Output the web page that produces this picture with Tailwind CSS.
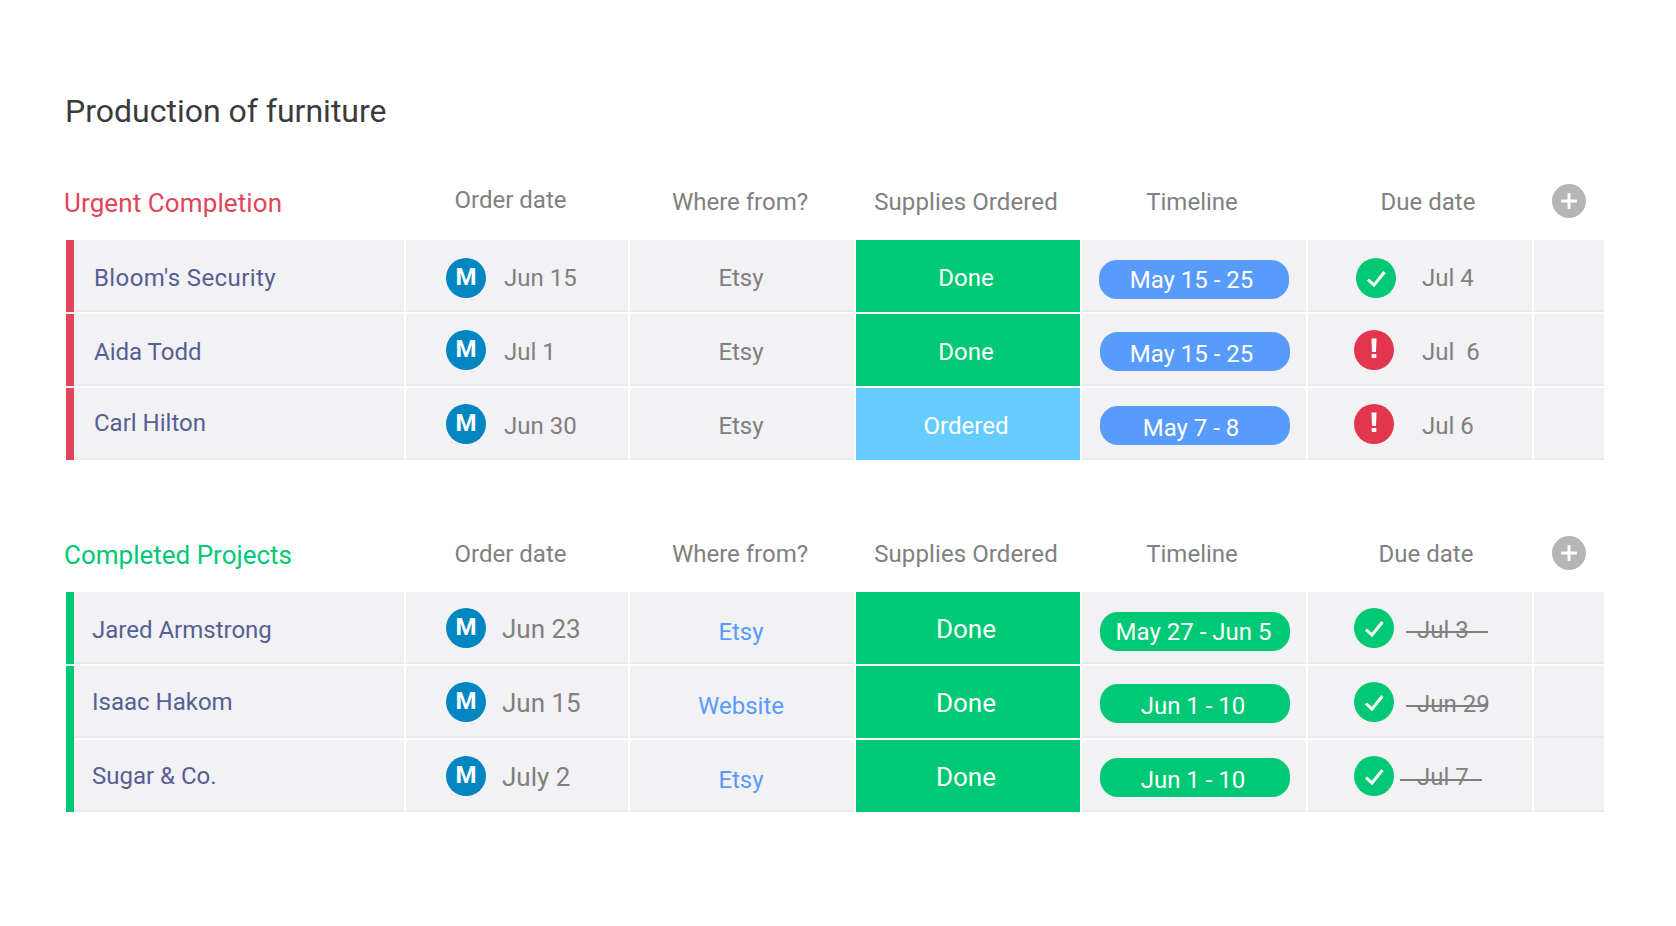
<!DOCTYPE html>
<html lang="en">
<head>
  <meta charset="UTF-8" />
  <title>Production of furniture</title>
  <script src="https://cdn.jsdelivr.net/npm/@tailwindcss/browser@4"></script>
</head>
<body class="bg-white font-['Roboto',sans-serif] text-[24px]">
  <div class="w-[1676px] h-[926px] pl-[66px] pt-[88px]">
    <h1 class="text-[32px] leading-[46px] text-[#3b3b3b] h-[46px] -ml-[1px]">Production of furniture</h1>

    <!-- Urgent Completion -->
    <div class="flex gap-[2px] h-[106px] text-[#808080]">
      <div class="w-[338px] -ml-[2px] mr-[2px] pt-[50px] text-[#e2445c] text-[26px] tracking-[0.1px]">Urgent Completion</div>
      <div class="w-[222px] pt-[48px] pr-[13px] text-center">Order date</div>
      <div class="w-[224px] pt-[50px] pr-[4px] text-center">Where from?</div>
      <div class="w-[224px] pt-[50px] pr-[4px] text-center tracking-[0.1px]">Supplies Ordered</div>
      <div class="w-[224px] pt-[50px] pr-[4px] text-center">Timeline</div>
      <div class="w-[224px] pt-[50px] pl-[16px] text-center">Due date</div>
      <div class="w-[70px] pt-[50px] pl-[18px]">
        <svg width="34" height="34" viewBox="0 0 34 34"><circle cx="17" cy="17" r="17" fill="#b5b5b5"/><path d="M17 9v16M9 17h16" stroke="#fff" stroke-width="3"/></svg>
      </div>
    </div>
    <div class="flex flex-col gap-[2px] w-[1538px]">
      <!-- row -->
      <div class="flex h-[72px]">
        <div class="w-[8px] bg-[#e2445c]"></div>
        <div class="w-[330px] bg-[#f2f1f4] border-b-2 border-[#e9e8ec] pl-[20px] pt-[20px] leading-[36px] tracking-[0.4px] text-[#565f94]">Bloom's Security</div>
        <div class="w-[222px] ml-[2px] bg-[#f2f1f4] border-b-2 border-[#e9e8ec] flex items-start pl-[40px] text-[#808080]"><span class="mt-[18px] w-[40px] h-[40px] pb-[3px] rounded-full bg-[#0086c0] text-white font-bold flex items-center justify-center">M</span><span class="ml-[18px] mt-[20px] leading-[36px]">Jun 15</span></div>
        <div class="w-[224px] ml-[2px] bg-[#f2f1f4] border-b-2 border-[#e9e8ec] pt-[20px] pr-[2px] leading-[36px] text-center text-[#808080]">Etsy</div>
        <div class="w-[224px] ml-[2px] bg-[#00c875] pt-[20px] pr-[4px] leading-[36px] text-center text-white">Done</div>
        <div class="w-[224px] ml-[2px] bg-[#f2f1f4] border-b-2 border-[#e9e8ec] pl-[17px] pt-[20px]"><div class="w-[190px] h-[39px] pt-[1px] rounded-[18px] bg-[#579bfc] text-white leading-[39px] text-center pr-[5px]">May 15 - 25</div></div>
        <div class="w-[224px] ml-[2px] bg-[#f2f1f4] border-b-2 border-[#e9e8ec] flex items-start pl-[48px] text-[#808080]"><svg class="mt-[18px]" width="40" height="40" viewBox="0 0 40 40"><circle cx="20" cy="20" r="20" fill="#00c875"/><path d="M12 21.5l6 5.5L28.5 14" fill="none" stroke="#fff" stroke-width="3"/></svg><span class="ml-[26px] mt-[20px] leading-[36px]">Jul 4</span></div>
        <div class="w-[70px] ml-[2px] bg-[#f2f1f4] border-b-2 border-[#e9e8ec]"></div>
      </div>
      <!-- row -->
      <div class="flex h-[72px]">
        <div class="w-[8px] bg-[#e2445c]"></div>
        <div class="w-[330px] bg-[#f2f1f4] border-b-2 border-[#e9e8ec] pl-[20px] pt-[20px] leading-[36px] text-[#565f94]">Aida Todd</div>
        <div class="w-[222px] ml-[2px] bg-[#f2f1f4] border-b-2 border-[#e9e8ec] flex items-start pl-[40px] text-[#808080]"><span class="mt-[16px] w-[40px] h-[40px] pb-[3px] rounded-full bg-[#0086c0] text-white font-bold flex items-center justify-center">M</span><span class="ml-[18px] mt-[20px] leading-[36px]">Jul 1</span></div>
        <div class="w-[224px] ml-[2px] bg-[#f2f1f4] border-b-2 border-[#e9e8ec] pt-[20px] pr-[2px] leading-[36px] text-center text-[#808080]">Etsy</div>
        <div class="w-[224px] ml-[2px] bg-[#00c875] pt-[20px] pr-[4px] leading-[36px] text-center text-white">Done</div>
        <div class="w-[224px] ml-[2px] bg-[#f2f1f4] border-b-2 border-[#e9e8ec] pl-[18px] pt-[18px]"><div class="w-[190px] h-[39px] pt-[3px] rounded-[18px] bg-[#579bfc] text-white leading-[39px] text-center pr-[7px]">May 15 - 25</div></div>
        <div class="w-[224px] ml-[2px] bg-[#f2f1f4] border-b-2 border-[#e9e8ec] flex items-start pl-[46px] text-[#808080]"><svg class="mt-[16px]" width="40" height="40" viewBox="0 0 40 40"><circle cx="20" cy="20" r="20" fill="#e2364f"/><path d="M17.5 8.5h5l-.5 13.5h-4zM17.7 24h4.6v4h-4.6z" fill="#fff"/></svg><span class="ml-[28px] mt-[20px] leading-[36px]">Jul &nbsp;6</span></div>
        <div class="w-[70px] ml-[2px] bg-[#f2f1f4] border-b-2 border-[#e9e8ec]"></div>
      </div>
      <!-- row -->
      <div class="flex h-[72px]">
        <div class="w-[8px] bg-[#e2445c]"></div>
        <div class="w-[330px] bg-[#f2f1f4] border-b-2 border-[#e9e8ec] pl-[20px] pt-[17px] leading-[36px] text-[#565f94]">Carl Hilton</div>
        <div class="w-[222px] ml-[2px] bg-[#f2f1f4] border-b-2 border-[#e9e8ec] flex items-start pl-[40px] text-[#808080]"><span class="mt-[16px] w-[40px] h-[40px] pb-[3px] rounded-full bg-[#0086c0] text-white font-bold flex items-center justify-center">M</span><span class="ml-[18px] mt-[20px] leading-[36px]">Jun 30</span></div>
        <div class="w-[224px] ml-[2px] bg-[#f2f1f4] border-b-2 border-[#e9e8ec] pt-[20px] pr-[2px] leading-[36px] text-center text-[#808080]">Etsy</div>
        <div class="w-[224px] ml-[2px] bg-[#66ccff] pt-[20px] pr-[4px] leading-[36px] text-center text-white">Ordered</div>
        <div class="w-[224px] ml-[2px] bg-[#f2f1f4] border-b-2 border-[#e9e8ec] pl-[18px] pt-[18px]"><div class="w-[190px] h-[39px] pt-[3px] rounded-[18px] bg-[#579bfc] text-white leading-[39px] text-center pr-[8px]">May 7 - 8</div></div>
        <div class="w-[224px] ml-[2px] bg-[#f2f1f4] border-b-2 border-[#e9e8ec] flex items-start pl-[46px] text-[#808080]"><svg class="mt-[16px]" width="40" height="40" viewBox="0 0 40 40"><circle cx="20" cy="20" r="20" fill="#e2364f"/><path d="M17.5 8.5h5l-.5 13.5h-4zM17.7 24h4.6v4h-4.6z" fill="#fff"/></svg><span class="ml-[28px] mt-[20px] leading-[36px]">Jul 6</span></div>
        <div class="w-[70px] ml-[2px] bg-[#f2f1f4] border-b-2 border-[#e9e8ec]"></div>
      </div>
    </div>

    <!-- Completed Projects -->
    <div class="flex gap-[2px] h-[106px] mt-[26px] text-[#808080]">
      <div class="w-[338px] -ml-[2px] mr-[2px] pt-[50px] text-[#00c875] text-[26px]">Completed Projects</div>
      <div class="w-[222px] pt-[50px] pr-[13px] text-center">Order date</div>
      <div class="w-[224px] pt-[50px] pr-[4px] text-center">Where from?</div>
      <div class="w-[224px] pt-[50px] pr-[4px] text-center tracking-[0.1px]">Supplies Ordered</div>
      <div class="w-[224px] pt-[50px] pr-[4px] text-center">Timeline</div>
      <div class="w-[224px] pt-[50px] pl-[12px] text-center">Due date</div>
      <div class="w-[70px] pt-[50px] pl-[18px]">
        <svg width="34" height="34" viewBox="0 0 34 34"><circle cx="17" cy="17" r="17" fill="#b5b5b5"/><path d="M17 9v16M9 17h16" stroke="#fff" stroke-width="3"/></svg>
      </div>
    </div>
    <div class="flex flex-col gap-[2px] w-[1538px]">
      <!-- row -->
      <div class="flex h-[72px]">
        <div class="w-[8px] bg-[#00c875]"></div>
        <div class="w-[330px] bg-[#f2f1f4] border-b-2 border-[#e9e8ec] pl-[18px] pt-[20px] leading-[36px] text-[#565f94]">Jared Armstrong</div>
        <div class="w-[222px] ml-[2px] bg-[#f2f1f4] border-b-2 border-[#e9e8ec] flex items-start pl-[40px] text-[#808080]"><span class="mt-[16px] w-[40px] h-[40px] pb-[3px] rounded-full bg-[#0086c0] text-white font-bold flex items-center justify-center">M</span><span class="ml-[16px] mt-[19px] leading-[36px] text-[26px]">Jun 23</span></div>
        <div class="w-[224px] ml-[2px] bg-[#f2f1f4] border-b-2 border-[#e9e8ec] pt-[22px] pr-[2px] leading-[36px] text-center text-[#579bfc]">Etsy</div>
        <div class="w-[224px] ml-[2px] bg-[#00c875] pt-[19px] pr-[4px] leading-[36px] text-[26px] text-center text-white">Done</div>
        <div class="w-[224px] ml-[2px] bg-[#f2f1f4] border-b-2 border-[#e9e8ec] pl-[18px] pt-[20px]"><div class="w-[190px] h-[39px] pt-[1px] rounded-[18px] bg-[#00c875] text-white leading-[39px] text-center pr-[3px]">May 27 - Jun 5</div></div>
        <div class="w-[224px] ml-[2px] bg-[#f2f1f4] border-b-2 border-[#e9e8ec] flex items-start pl-[46px] text-[#808080]"><svg class="mt-[16px]" width="40" height="40" viewBox="0 0 40 40"><circle cx="20" cy="20" r="20" fill="#00c875"/><path d="M12 21.5l6 5.5L28.5 14" fill="none" stroke="#fff" stroke-width="3"/></svg><span class="relative ml-[23px] mt-[20px] leading-[36px]">Jul 3<span class="absolute left-[-11px] top-[19px] w-[82px] h-[2px] bg-[#808080]"></span></span></div>
        <div class="w-[70px] ml-[2px] bg-[#f2f1f4] border-b-2 border-[#e9e8ec]"></div>
      </div>
      <!-- row -->
      <div class="flex h-[72px]">
        <div class="w-[8px] h-[74px] bg-[#00c875]"></div>
        <div class="w-[330px] bg-[#f2f1f4] border-b-2 border-[#e9e8ec] pl-[18px] pt-[18px] leading-[36px] text-[#565f94]">Isaac Hakom</div>
        <div class="w-[222px] ml-[2px] bg-[#f2f1f4] border-b-2 border-[#e9e8ec] flex items-start pl-[40px] text-[#808080]"><span class="mt-[16px] w-[40px] h-[40px] pb-[3px] rounded-full bg-[#0086c0] text-white font-bold flex items-center justify-center">M</span><span class="ml-[16px] mt-[19px] leading-[36px] text-[26px]">Jun 15</span></div>
        <div class="w-[224px] ml-[2px] bg-[#f2f1f4] border-b-2 border-[#e9e8ec] pt-[22px] pr-[2px] leading-[36px] text-center text-[#579bfc]">Website</div>
        <div class="w-[224px] ml-[2px] bg-[#00c875] pt-[19px] pr-[4px] leading-[36px] text-[26px] text-center text-white">Done</div>
        <div class="w-[224px] ml-[2px] bg-[#f2f1f4] border-b-2 border-[#e9e8ec] pl-[18px] pt-[18px]"><div class="w-[190px] h-[39px] pt-[3px] rounded-[18px] bg-[#00c875] text-white leading-[39px] text-center pr-[4px]">Jun 1 - 10</div></div>
        <div class="w-[224px] ml-[2px] bg-[#f2f1f4] border-b-2 border-[#e9e8ec] flex items-start pl-[46px] text-[#808080]"><svg class="mt-[16px]" width="40" height="40" viewBox="0 0 40 40"><circle cx="20" cy="20" r="20" fill="#00c875"/><path d="M12 21.5l6 5.5L28.5 14" fill="none" stroke="#fff" stroke-width="3"/></svg><span class="relative ml-[23px] mt-[20px] leading-[36px]">Jun 29<span class="absolute left-[-11px] top-[19px] w-[82px] h-[2px] bg-[#808080]"></span></span></div>
        <div class="w-[70px] ml-[2px] bg-[#f2f1f4] border-b-2 border-[#e9e8ec]"></div>
      </div>
      <!-- row -->
      <div class="flex h-[72px]">
        <div class="w-[8px] bg-[#00c875]"></div>
        <div class="w-[330px] bg-[#f2f1f4] border-b-2 border-[#e9e8ec] pl-[18px] pt-[18px] leading-[36px] text-[#565f94]">Sugar &amp; Co.</div>
        <div class="w-[222px] ml-[2px] bg-[#f2f1f4] border-b-2 border-[#e9e8ec] flex items-start pl-[40px] text-[#808080]"><span class="mt-[16px] w-[40px] h-[40px] pb-[3px] rounded-full bg-[#0086c0] text-white font-bold flex items-center justify-center">M</span><span class="ml-[16px] mt-[19px] leading-[36px] text-[26px]">July 2</span></div>
        <div class="w-[224px] ml-[2px] bg-[#f2f1f4] border-b-2 border-[#e9e8ec] pt-[22px] pr-[2px] leading-[36px] text-center text-[#579bfc]">Etsy</div>
        <div class="w-[224px] ml-[2px] bg-[#00c875] pt-[19px] pr-[4px] leading-[36px] text-[26px] text-center text-white">Done</div>
        <div class="w-[224px] ml-[2px] bg-[#f2f1f4] border-b-2 border-[#e9e8ec] pl-[18px] pt-[18px]"><div class="w-[190px] h-[39px] pt-[3px] rounded-[18px] bg-[#00c875] text-white leading-[39px] text-center pr-[4px]">Jun 1 - 10</div></div>
        <div class="w-[224px] ml-[2px] bg-[#f2f1f4] border-b-2 border-[#e9e8ec] flex items-start pl-[46px] text-[#808080]"><svg class="mt-[16px]" width="40" height="40" viewBox="0 0 40 40"><circle cx="20" cy="20" r="20" fill="#00c875"/><path d="M12 21.5l6 5.5L28.5 14" fill="none" stroke="#fff" stroke-width="3"/></svg><span class="relative ml-[23px] mt-[19px] leading-[36px]">Jul 7<span class="absolute left-[-17px] top-[20px] w-[82px] h-[2px] bg-[#808080]"></span></span></div>
        <div class="w-[70px] h-[74px] -mt-[2px] ml-[2px] bg-[#f2f1f4] border-b-2 border-[#e9e8ec]"></div>
      </div>
    </div>
  </div>
</body>
</html>
